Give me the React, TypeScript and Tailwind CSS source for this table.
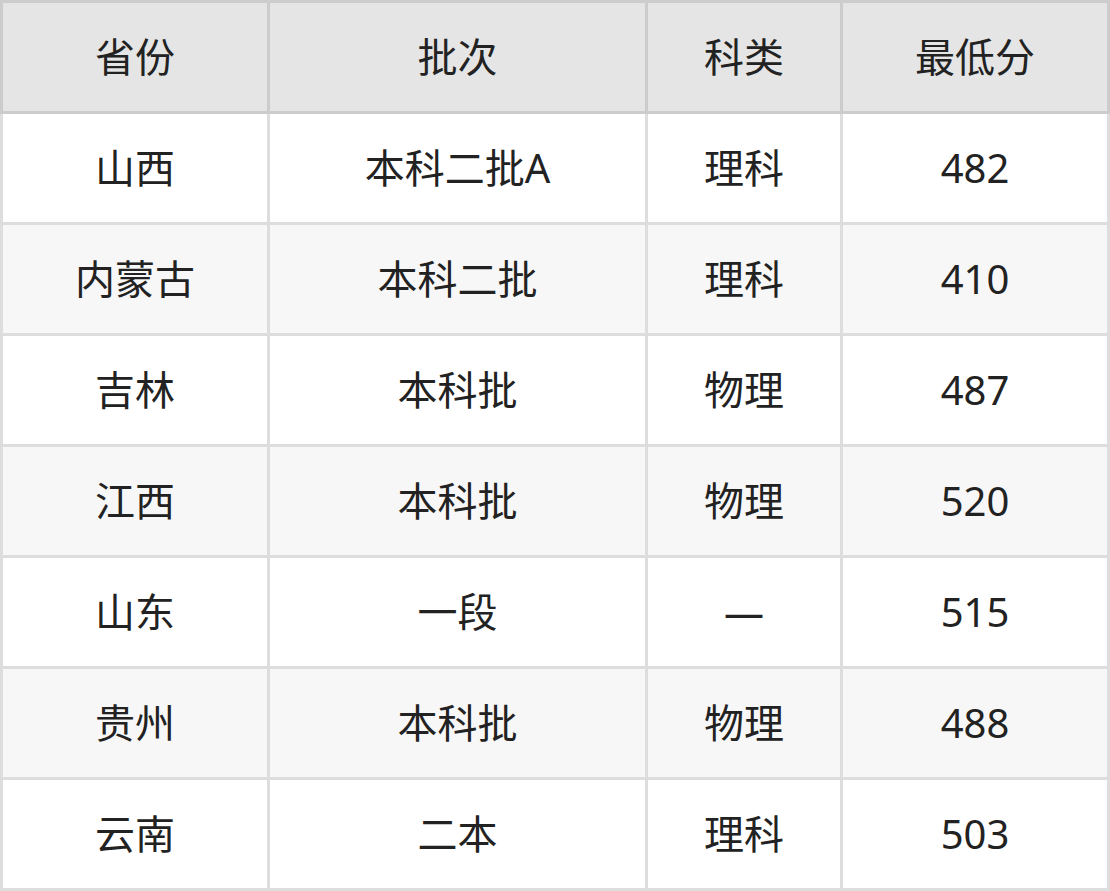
import React from "react";

const rows = [
  ["山西", "本科二批A", "理科", "482"],
  ["内蒙古", "本科二批", "理科", "410"],
  ["吉林", "本科批", "物理", "487"],
  ["江西", "本科批", "物理", "520"],
  ["山东", "一段", "—", "515"],
  ["贵州", "本科批", "物理", "488"],
  ["云南", "二本", "理科", "503"],
];

const font = { fontFamily: '"Noto Sans", "Noto Sans CJK SC", sans-serif' };

export default function App() {
  return (
    <div className="w-[1110px] flex flex-col text-[40px] text-[#222]" style={font}>
      <div className="grid grid-cols-[264px_375px_192px_264px] gap-[3px] p-[3px] bg-[#cccccc]">
        {["省份", "批次", "科类", "最低分"].map((h) => (
          <div key={h} className="h-[108px] flex items-center justify-center bg-[#e5e5e5]">
            {h}
          </div>
        ))}
      </div>
      {rows.map((r, i) => (
        <div
          key={i}
          className="grid grid-cols-[264px_375px_192px_264px] gap-[3px] px-[3px] pb-[3px] bg-[#dddddd]"
        >
          {r.map((c, j) => (
            <div
              key={j}
              className={
                "h-[108px] flex items-center justify-center " +
                (i % 2 === 0 ? "bg-white" : "bg-[#f7f7f7]")
              }
            >
              {c}
            </div>
          ))}
        </div>
      ))}
    </div>
  );
}
